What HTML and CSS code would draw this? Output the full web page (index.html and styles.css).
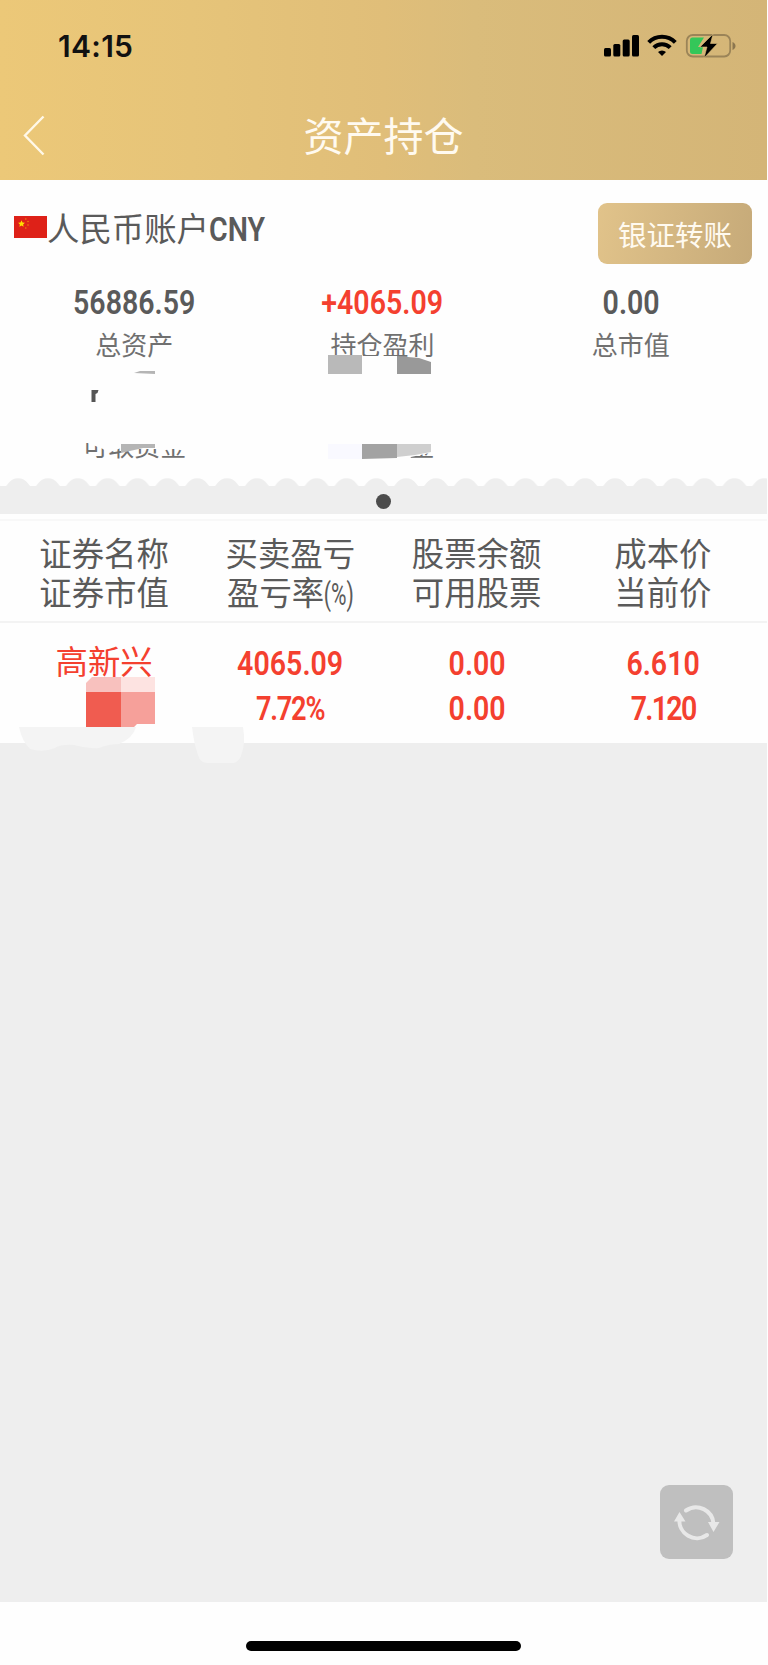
FILE: index.html
```
<!DOCTYPE html>
<html lang="zh-CN">
<head>
    <meta charset="UTF-8">
    <meta name="viewport" content="width=device-width, initial-scale=1.0">
    <title>资产持仓</title>
    <link rel="stylesheet" href="styles.css">
</head>
<body>
    <header class="header">
        <div class="status-bar">
            <span class="time">14:15</span>
            <svg class="status-icons" width="136" height="28" viewBox="0 0 136 28">
                <rect x="1" y="15" width="7" height="8.5" rx="1.5"/>
                <rect x="10.3" y="11" width="7" height="12.5" rx="1.5"/>
                <rect x="19.7" y="6.5" width="7" height="17" rx="1.5"/>
                <rect x="29" y="2" width="7" height="21.5" rx="1.5"/>
                <g fill="none" stroke="#000" stroke-width="4">
                    <path d="M45.7 9.3a18.5 18.5 0 0 1 26.6 0"/>
                    <path d="M50.8 14.6a11.5 11.5 0 0 1 16.4 0"/>
                </g>
                <path d="M59 23l-4-4a5.8 5.8 0 0 1 8 0z"/>
                <rect x="83.8" y="2" width="43.4" height="21.500" rx="6" fill="none" stroke="#9b8458" stroke-width="1.8"/>
                <path d="M129.500 9c4 1.500 4 6.500 0 8z" fill="#8b764f"/>
                <path d="M89.500 4.500H101l-6 9.500h5l-1.500 7h-9A2.500 2.500 0 0 1 87 18.500V7a2.500 2.500 0 0 1 2.500-2.500z" fill="#34c759"/>
                <path d="M110 1L97 14h7l-3 11 13.500-14.500h-7z" stroke="#d9bb7b" stroke-width=".6"/>
            </svg>
        </div>
        <div class="nav-bar">
            <svg class="back" width="24" height="42" viewBox="0 0 24 42"><path d="M20.500 1.500L2 20.500l18.500 19"/></svg>
            <h1>资产持仓</h1>
        </div>
    </header>

    <section class="account">
        <div class="account-title">
            <svg class="flag" width="33" height="22" viewBox="0 0 33 22">
                <rect width="33" height="22" fill="#de2118"/>
                <path d="M7.500 4.300l1 2.200 2.400.3-1.800 1.600.5 2.400-2.100-1.200-2.100 1.200.5-2.400-1.800-1.600 2.400-.3z" fill="#ffde00"/>
                <g fill="#ee7d10"><circle cx="11.800" cy="3" r=".8"/><circle cx="14" cy="5.500" r=".8"/><circle cx="14" cy="9" r=".8"/><circle cx="11.800" cy="12" r=".8"/></g>
            </svg>
            <h2>人民币账户<span class="num">CNY</span></h2>
            <button class="transfer">银证转账</button>
        </div>
        <div class="summary">
            <div class="item"><b class="num">56886.59</b><span>总资产</span></div>
            <div class="item red"><b class="num">+4065.09</b><span>持仓盈利</span></div>
            <div class="item"><b class="num">0.00</b><span>总市值</span></div>
        </div>
        <div class="summary summary-hidden">
            <div class="item"><span>可取资金</span></div>
            <div class="item"><span>可用资金</span></div>
            <div class="item"></div>
        </div>
        <!-- hides the private amounts -->
        <svg class="mask" width="380" height="120" viewBox="70 350 380 120">
            <path fill="#fefefe" d="M80 374H190V444H121V448L108 453 103 449 88 443H80z"/>
            <path fill="#fefefe" d="M121 443h68v6h-68zM328 374h106v78l-9 2-14 3-4 5h-79z"/>
            <path fill="#b9b9b9" d="M328 355h34v19h-34z"/>
            <path fill="#fefefe" d="M362 356h35v18h-35z"/>
            <path fill="#999" d="M397 356l22 2 12 4v12h-34z"/>
            <path fill="#b5b5b5" d="M134 373l6-2h15v3zM121 444h34v4h-12l-22 5z"/>
            <path fill="#f9f9ff" d="M328 444h34v15h-34z"/>
            <path fill="#a3a3a3" d="M362 444h35v14l-35 1z"/>
            <path fill="#cfcfcf" d="M397 444h34v8l-16 3-18 2z"/>
            <path fill="#555" d="M91.500 390h7l-1 3-2 1v8h-4z"/>
        </svg>
    </section>

    <div class="pager">
        <svg class="wave" width="767" height="9">
            <defs>
                <pattern id="bump" x="3.100" width="29.850" height="9" patternUnits="userSpaceOnUse">
                    <path d="M0 9q3 0 5-3.500Q9 .2 15 .2t10 5.300q2 3.500 4.850 3.500z" fill="#eee"/>
                </pattern>
            </defs>
            <rect width="767" height="9" fill="url(#bump)"/>
        </svg>
        <i class="dot"></i>
    </div>

    <section class="holdings">
        <div class="row head">
            <div>证券名称<br>证券市值</div>
            <div>买卖盈亏<br>盈亏率<span class="num thin">(%)</span></div>
            <div>股票余额<br>可用股票</div>
            <div>成本价<br>当前价</div>
        </div>
        <div class="row stock">
            <div class="name">高新兴</div>
            <div><b class="num">4065.09</b><b class="num rate">7.72%</b></div>
            <div><b class="num">0.00</b><b class="num">0.00</b></div>
            <div><b class="num">6.610</b><b class="num price">7.120</b></div>
        </div>
        <svg class="mosaic" width="250" height="100" viewBox="0 670 250 100">
            <path fill="#fefefe" d="M80 677h75v15H80z"/>
            <path fill="#f8c1be" d="M92 677h29v15H86v-9z"/>
            <path fill="#fde3e1" d="M121 677h34v15h-34z"/>
            <path fill="#f05c50" d="M86 692h35v35H86z"/>
            <path fill="#f6a09a" d="M121 692h34v32h-18l-3 3h-13z"/>
            <path fill="#f4f4f4" d="M19 727h117q-3 11-17 17-10 0-20 4-12 1-25-3-13-1-19 3-12 5-25 1-8-8-11-22zM192 727h51q3 16-2 29-3 7-8 7h-26q-7 0-9-8-4-11-6-28z"/>
        </svg>
    </section>

    <main class="empty">
        <button class="refresh">
            <svg width="46" height="42" viewBox="0 0 46 42">
                <path d="M12 9.500A17.500 17.500 0 0 1 39.500 23M33 34A17.500 17.500 0 0 1 5.500 18"/>
                <path class="tip" d="M34 21h11.500l-6 10zM0 20.500h11.500L5.500 11z"/>
            </svg>
        </button>
    </main>
    <footer class="home"><i></i></footer>
</body>
</html>
```
FILE: styles.css
```
* {
    box-sizing: border-box;
}

body {
    width: 767px;
    height: 1665px;
    margin: 0;
    display: flex;
    flex-direction: column;
    background: #fefefe;
    color: #5a5a5a;
    font-family: Roboto, "Noto Sans CJK SC", sans-serif;
    overflow: hidden;
}

h1, h2 {
    margin: 0;
    font-weight: 400;
}

.num {
    display: inline-block;
    font-family: Roboto, sans-serif;
    font-weight: 600;
    transform: scaleX(.84);
}

.header {
    height: 180px;
    background: linear-gradient(90deg, #ecc878 0%, #e6c479 25%, #e0be79 50%, #dabc7b 62%, #d4b577 100%);
}

.status-bar {
    display: flex;
    justify-content: space-between;
    align-items: center;
    height: 92px;
    padding: 0 28px 0 58px;
}

.time {
    color: #111;
    font: 600 30px/30px Inter, sans-serif;
    letter-spacing: .3px;
}

.status-icons {
    margin-top: 2px;
}

.nav-bar {
    display: flex;
    align-items: center;
    height: 88px;
    padding: 0 23px;
}

.back {
    fill: none;
    stroke: #fff8e8;
    stroke-width: 2.4;
}

.nav-bar h1 {
    flex: 1;
    margin: 3px 24px 0 0;
    text-align: center;
    color: #fffaf0;
    font-size: 40px;
    line-height: 60px;
}

.account {
    position: relative;
    height: 298px;
}

.account-title {
    display: flex;
    height: 103px;
    padding: 23px 15px 0 14px;
}

.flag {
    margin-top: 13px;
}

.account-title h2 {
    flex: 1;
    font-size: 32.4px;
    line-height: 52px;
}

.account-title h2 .num {
    font-size: 34px;
    transform-origin: left;
}

.transfer {
    width: 154px;
    height: 61px;
    padding: 0;
    border: none;
    border-radius: 9px;
    background: linear-gradient(100deg, #e1c38a, #c6aa79);
    color: #fffaf0;
    font: 28.5px/59px "Noto Sans CJK SC", sans-serif;
}

.summary {
    display: grid;
    grid-template-columns: repeat(3, 1fr);
    padding: 0 12px 0 10px;
    text-align: center;
}

.item b {
    display: block;
    font-size: 34px;
    line-height: 38px;
}

.item span {
    display: block;
    font-size: 26px;
    line-height: 50px;
    color: #707070;
}

.red b {
    color: #f4402f;
}

.summary-hidden {
    padding-top: 51px;
}

.mask {
    position: absolute;
    left: 70px;
    top: 170px;
}

.pager {
    height: 36px;
    text-align: center;
    background: linear-gradient(#eee, #eee) 0 8px no-repeat;
}

.wave {
    display: block;
}

.dot {
    display: block;
    width: 15px;
    height: 15px;
    margin: 7px auto 0;
    border-radius: 50%;
    background: #4c4c4c;
}

.holdings {
    position: relative;
    height: 229px;
    padding-top: 5px;
    background: #fefefe;
}

.row {
    display: grid;
    grid-template-columns: repeat(4, 1fr);
    padding: 0 11px;
    text-align: center;
}

.head {
    height: 104px;
    padding-top: 15px;
    border-top: 2px solid #f8f8f8;
    border-bottom: 2px solid #f3f3f3;
    font-size: 32.4px;
    line-height: 39px;
}

.thin {
    font-size: 32px;
    font-weight: 400;
    margin: 0 -8px 0 -8px;
    transform: scaleX(.66);
}

.stock {
    padding-top: 18px;
    color: #f4402f;
    font-size: 32.4px;
    line-height: 45px;
}

.stock b {
    display: block;
    font-size: 34px;
}

.stock .rate {
    letter-spacing: -1.5px;
    transform: scaleX(.8);
}

.stock .price {
    letter-spacing: -2px;
}

.mosaic {
    position: absolute;
    left: 0;
    top: 156px;
}

.empty {
    flex: 1;
    display: flex;
    justify-content: flex-end;
    align-items: flex-end;
    padding: 0 34px 43px 0;
    background: #eee;
}

.refresh {
    display: flex;
    justify-content: center;
    align-items: center;
    width: 73px;
    height: 74px;
    padding: 0;
    border: none;
    border-radius: 9px;
    background: #bfbfbf;
}

.refresh path {
    fill: none;
    stroke: #e8e8e8;
    stroke-width: 4;
    stroke-linecap: round;
}

.refresh .tip {
    fill: #e8e8e8;
    stroke: none;
}

.home {
    display: flex;
    justify-content: center;
    height: 63px;
    padding-top: 39px;
}

.home i {
    width: 275px;
    height: 10px;
    border-radius: 5px;
    background: #000;
}
```
